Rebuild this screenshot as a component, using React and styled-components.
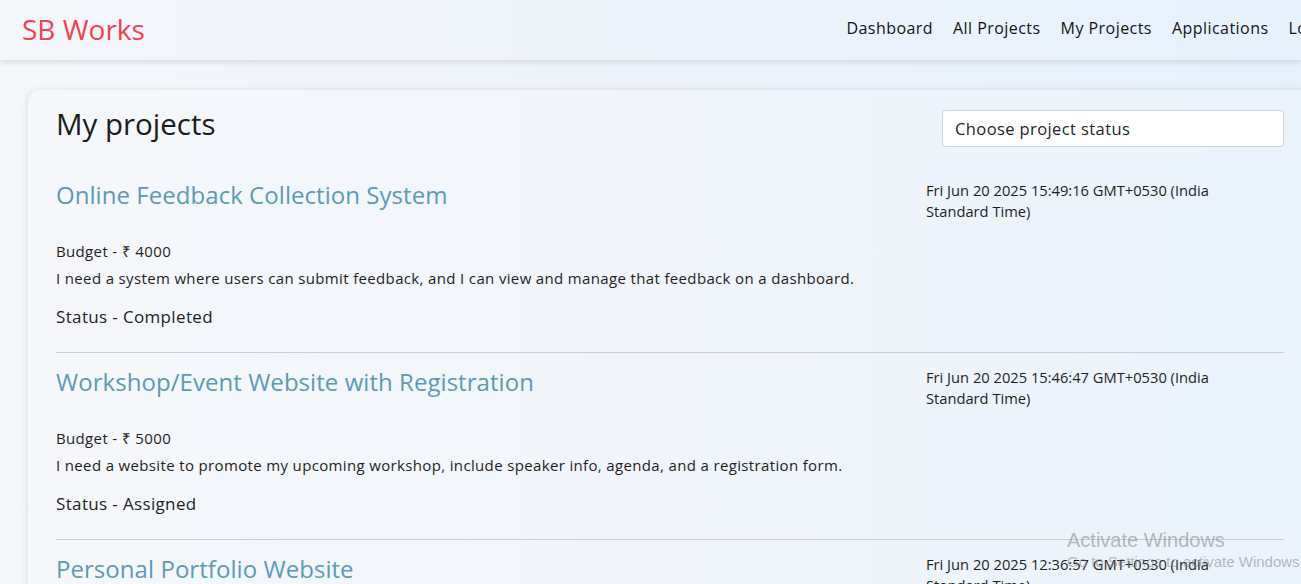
import React from 'react';
import styled, { createGlobalStyle } from 'styled-components';

const GlobalStyle = createGlobalStyle`
  * { box-sizing: border-box; }
  html, body {
    margin: 0;
    padding: 0;
    overflow: hidden;
  }
  body {
    font-family: 'Open Sans', 'Liberation Sans', sans-serif;
    color: #1f1f1f;
    background: linear-gradient(90deg, #f4f6fa 0%, #eef3fb 50%, #e6f1fc 100%);
    min-height: 584px;
  }
`;

const projects = [
  {
    title: 'Online Feedback Collection System',
    date: 'Fri Jun 20 2025 15:49:16 GMT+0530 (India Standard Time)',
    budget: 4000,
    description:
      'I need a system where users can submit feedback, and I can view and manage that feedback on a dashboard.',
    status: 'Completed',
  },
  {
    title: 'Workshop/Event Website with Registration',
    date: 'Fri Jun 20 2025 15:46:47 GMT+0530 (India Standard Time)',
    budget: 5000,
    description:
      'I need a website to promote my upcoming workshop, include speaker info, agenda, and a registration form.',
    status: 'Assigned',
  },
  {
    title: 'Personal Portfolio Website',
    date: 'Fri Jun 20 2025 12:36:57 GMT+0530 (India Standard Time)',
    budget: 3000,
    description: 'I need a simple portfolio website to showcase my work.',
    status: 'Available',
  },
];

function App() {
  return (
    <Page>
      <GlobalStyle />
      <Navbar>
        <Logo>SB Works</Logo>
        <NavLinks>
          <NavLink>Dashboard</NavLink>
          <NavLink>All Projects</NavLink>
          <NavLink>My Projects</NavLink>
          <NavLink>Applications</NavLink>
          <NavLink>Logout</NavLink>
        </NavLinks>
      </Navbar>

      <Card>
        <CardHeader>
          <PageTitle>My projects</PageTitle>
          <StatusSelect defaultValue="">
            <option value="">Choose project status</option>
            <option value="Available">Available</option>
            <option value="Assigned">Assigned</option>
            <option value="Completed">Completed</option>
          </StatusSelect>
        </CardHeader>

        {projects.map((project, index) => (
          <ProjectItem
            key={project.title}
            $first={index === 0}
            $last={index === projects.length - 1}
          >
            <ProjectTop>
              <ProjectTitle>{project.title}</ProjectTitle>
              <ProjectDate>{project.date}</ProjectDate>
            </ProjectTop>
            <Budget>Budget - &#8377; {project.budget}</Budget>
            <Description>{project.description}</Description>
            <Status>Status - {project.status}</Status>
          </ProjectItem>
        ))}
      </Card>

      <Watermark>
        <WatermarkTitle>Activate Windows</WatermarkTitle>
        <WatermarkSub>Go to Settings to activate Windows.</WatermarkSub>
      </Watermark>
    </Page>
  );
}

export default App;

const Page = styled.div`
  width: 1301px;
  height: 584px;
  overflow: hidden;
  position: relative;
`;

const Navbar = styled.nav`
  height: 60px;
  display: flex;
  align-items: center;
  justify-content: space-between;
  padding-left: 22px;
  box-shadow: 0 2px 6px rgba(0, 0, 0, 0.12);
  white-space: nowrap;
  position: relative;
  z-index: 1;
`;

const Logo = styled.h3`
  margin: 0 0 2px;
  font-size: 28px;
  font-weight: 400;
  color: #f0434f;
`;

const NavLinks = styled.div`
  display: flex;
  gap: 20px;
  margin-right: -42px;
  margin-bottom: 4px;
`;

const NavLink = styled.span`
  font-size: 16px;
  letter-spacing: 0.45px;
  color: #141414;
  cursor: pointer;
`;

const Card = styled.div`
  margin: 30px 0 0 28px;
  width: 1284px;
  padding: 17px 28px 0;
  border-radius: 12px;
  background: rgba(255, 255, 255, 0.2);
  box-shadow: 0 1px 7px rgba(0, 0, 0, 0.13);
`;

const CardHeader = styled.div`
  display: flex;
  justify-content: space-between;
  align-items: flex-start;
  height: 40px;
`;

const PageTitle = styled.h2`
  margin: 0;
  font-size: 29.5px;
  font-weight: 400;
  color: #1d1d1d;
  line-height: 34px;
`;

const StatusSelect = styled.select`
  appearance: none;
  width: 342px;
  height: 37px;
  margin-top: 3px;
  padding: 0 12px;
  font-family: inherit;
  font-size: 16.5px;
  letter-spacing: 0.4px;
  color: #1f1f1f;
  background: #fff;
  border: 1px solid #cfd3da;
  border-radius: 4px;
`;

const ProjectItem = styled.div`
  padding: ${(p) => (p.$first ? '33px' : '14px')} 0 ${(p) => (p.$last ? '0' : '24px')};
  border-bottom: ${(p) => (p.$last ? 'none' : '1px solid #c9cdd3')};
`;

const ProjectTop = styled.div`
  display: flex;
  justify-content: space-between;
  align-items: flex-start;
`;

const ProjectTitle = styled.h3`
  margin: 0;
  font-size: 24px;
  line-height: 30px;
  letter-spacing: 0.05px;
  font-weight: 400;
  color: #5d9ab9;
`;

const ProjectDate = styled.p`
  margin: 0;
  width: 358px;
  padding-right: 30px;
  font-size: 14.7px;
  line-height: 21px;
  color: #1f1f1f;
`;

const Budget = styled.p`
  margin: 19px 0 0;
  font-size: 15px;
  letter-spacing: 0.35px;
  line-height: 20px;
`;

const Description = styled.p`
  margin: 7px 0 0;
  font-size: 15px;
  letter-spacing: 0.35px;
  line-height: 20px;
`;

const Status = styled.h5`
  margin: 18px 0 0;
  font-size: 17px;
  letter-spacing: 0.35px;
  font-weight: 400;
  line-height: 22px;
`;

const Watermark = styled.div`
  position: absolute;
  left: 1067px;
  top: 528px;
  color: rgba(130, 130, 130, 0.55);
  font-family: 'Liberation Sans', 'Noto Sans', sans-serif;
  white-space: nowrap;
  pointer-events: none;
`;

const WatermarkTitle = styled.div`
  font-size: 20px;
  line-height: 24px;
`;

const WatermarkSub = styled.div`
  font-size: 15px;
  line-height: 20px;
`;
